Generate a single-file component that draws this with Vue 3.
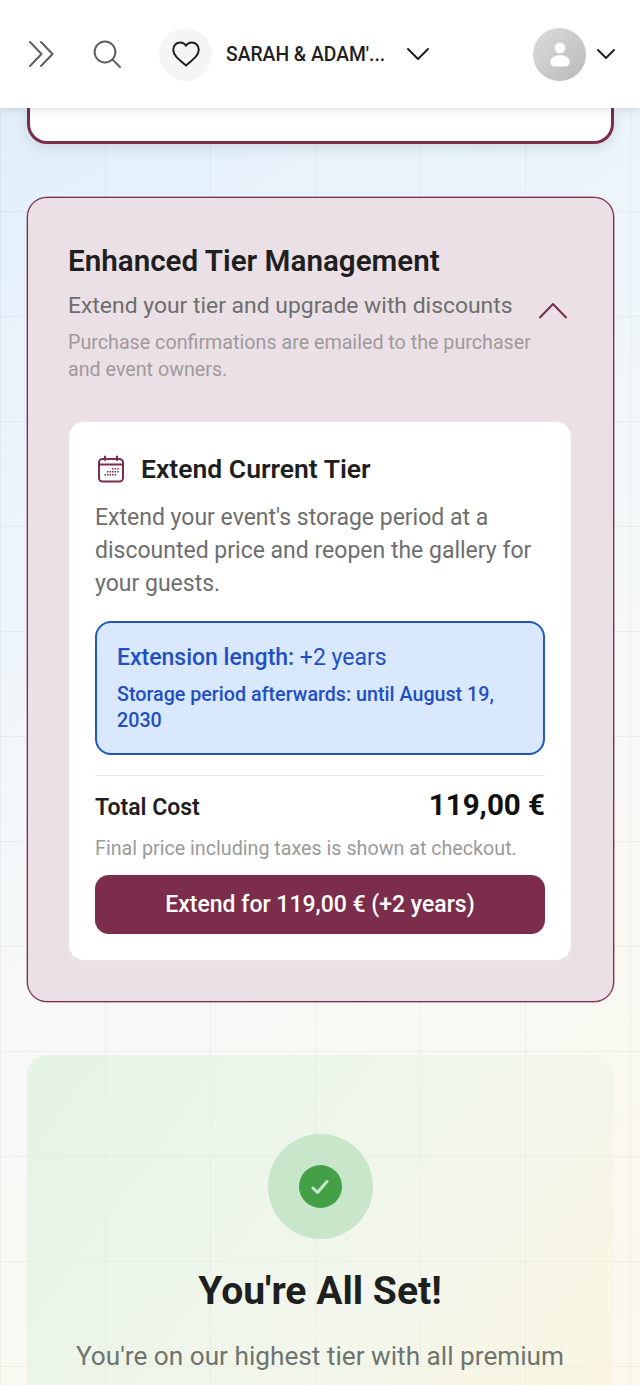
<script setup>
const brand = 'SARAH & ADAM\'...'
</script>

<template>
  <div class="page">
    <div class="grid"></div>
    <header class="topbar">
      <svg class="ico-double" width="28" height="28" viewBox="0 0 28 28" fill="none" stroke="#5f5f5f" stroke-width="2" stroke-linecap="round" stroke-linejoin="round">
        <path d="M2 2 L13.5 14 L2 26" />
        <path d="M13 2 L24.5 14 L13 26" />
      </svg>
      <svg class="ico-search" width="28" height="28" viewBox="0 0 28 28" fill="none" stroke="#5f5f5f" stroke-width="2" stroke-linecap="round">
        <circle cx="12" cy="12" r="10.4" />
        <path d="M19.6 19.6 L27 27" />
      </svg>
      <div class="heart-wrap">
        <svg width="28" height="26" viewBox="0 0 28 26" fill="none" stroke="#1f1f1f" stroke-width="2" stroke-linejoin="round">
          <path d="M14 24.4 C12.6 23.2 7.5 19.2 4.4 15.8 C2.3 13.5 1.2 11.3 1.2 8.8 C1.2 4.6 4.4 1.4 8.2 1.4 C10.6 1.4 12.8 2.6 14 4.8 C15.2 2.6 17.4 1.4 19.8 1.4 C23.6 1.4 26.8 4.6 26.8 8.8 C26.8 11.3 25.7 13.5 23.6 15.8 C20.5 19.2 15.4 23.2 14 24.4 Z" />
        </svg>
      </div>
      <span class="brand">{{ brand }}</span>
      <svg class="chev-main" width="24" height="14" viewBox="0 0 24 14" fill="none" stroke="#1f1f1f" stroke-width="2" stroke-linecap="round" stroke-linejoin="round">
        <path d="M2 2 L12 12 L22 2" />
      </svg>
      <div class="avatar">
        <svg width="20" height="25" viewBox="0 0 20 25" fill="#fff">
          <circle cx="10" cy="6" r="5.4" />
          <path d="M0.4 20 C0.4 15.4 4.8 13.2 10 13.2 C15.2 13.2 19.6 15.4 19.6 20 C19.6 23 17.5 24.4 15 24.4 L5 24.4 C2.5 24.4 0.4 23 0.4 20 Z" />
        </svg>
      </div>
      <svg class="chev-user" width="20" height="12" viewBox="0 0 20 12" fill="none" stroke="#1f1f1f" stroke-width="2" stroke-linecap="round" stroke-linejoin="round">
        <path d="M2 2 L10 10 L18 2" />
      </svg>
    </header>

    <main class="content">
      <div class="prev-card"></div>

      <section class="tier-card">
        <h2 class="tier-title">Enhanced Tier Management</h2>
        <div class="sub-row">
          <p class="tier-sub">Extend your tier and upgrade with discounts</p>
          <svg class="chev-up" width="30" height="17" viewBox="0 0 30 17" fill="none" stroke="#7b2d4b" stroke-width="2" stroke-linecap="round" stroke-linejoin="round">
            <path d="M2 15.5 L15 2 L28 15.5" />
          </svg>
        </div>
        <p class="tier-note">Purchase confirmations are emailed to the purchaser and event owners.</p>

        <div class="inner-card">
          <div class="inner-head">
            <svg class="cal" width="28" height="28" viewBox="0 0 28 28" fill="none" stroke="#7b2d4b" stroke-width="2" stroke-linecap="round">
              <rect x="2" y="4" width="24" height="22.5" rx="3.5" />
              <path d="M2 9.4 H26" />
              <path d="M8 1.5 V5 M20 1.5 V5" />
              <g fill="#7b2d4b" stroke="none">
                <rect x="15" y="13" width="1.5" height="1.5" /><rect x="17.6" y="13" width="1.5" height="1.5" /><rect x="20.2" y="13" width="1.5" height="1.5" />
                <rect x="10" y="16" width="1.5" height="1.5" /><rect x="12.5" y="16" width="1.5" height="1.5" /><rect x="15" y="16" width="1.5" height="1.5" /><rect x="17.6" y="16" width="1.5" height="1.5" /><rect x="20.2" y="16" width="1.5" height="1.5" />
                <rect x="7.5" y="19" width="1.5" height="1.5" /><rect x="10" y="19" width="1.5" height="1.5" /><rect x="12.5" y="19" width="1.5" height="1.5" /><rect x="15" y="19" width="1.5" height="1.5" /><rect x="17.6" y="19" width="1.5" height="1.5" />
              </g>
            </svg>
            <h3 class="inner-title">Extend Current Tier</h3>
          </div>
          <p class="inner-desc">Extend your event's storage period at a discounted price and reopen the gallery for your guests.</p>

          <div class="info-box">
            <p class="info-main"><strong>Extension length:</strong> +2 years</p>
            <p class="info-sub">Storage period afterwards: until August 19, 2030</p>
          </div>

          <div class="total-row">
            <span class="total-label">Total Cost</span>
            <span class="total-value">119,00 €</span>
          </div>
          <p class="tax-note">Final price including taxes is shown at checkout.</p>
          <button class="cta" type="button">Extend for 119,00 € (+2 years)</button>
        </div>
      </section>

      <section class="done-card">
        <div class="done-ring">
          <div class="done-dot">
            <svg width="18" height="16" viewBox="0 0 18 16" fill="none" stroke="#c8e6c9" stroke-width="3" stroke-linecap="round" stroke-linejoin="round">
              <path d="M2 9 L6.5 13.5 L16 2.5" />
            </svg>
          </div>
        </div>
        <h2 class="done-title">You're All Set!</h2>
        <p class="done-text">You're on our highest tier with all premium</p>
      </section>
    </main>
  </div>
</template>

<style scoped>
.page {
  position: relative;
  width: 640px;
  height: 1385px;
  overflow: hidden;
  font-family: Roboto, "Liberation Sans", sans-serif;
  background: linear-gradient(150deg, #dfeefb 0%, #ebf4fb 28%, #f7f9f8 58%, #fbf8ec 100%);
}
.grid {
  position: absolute;
  inset: 0;
  background-image:
    linear-gradient(to right, rgba(120, 120, 120, 0.08) 1px, transparent 1px),
    linear-gradient(to bottom, rgba(120, 120, 120, 0.08) 1px, transparent 1px);
  background-size: 105px 105px;
  background-position: 0 1px;
}
.topbar {
  position: relative;
  z-index: 2;
  height: 108px;
  background: #fff;
  box-shadow: 0 2px 8px rgba(0, 0, 0, 0.12);
  display: flex;
  align-items: center;
  padding: 0 24px 0 28px;
  box-sizing: border-box;
}
.ico-search { margin-left: 37px; }
.heart-wrap {
  width: 53px;
  height: 53px;
  border-radius: 50%;
  background: #f5f5f5;
  display: flex;
  align-items: center;
  justify-content: center;
  margin-left: 38px;
}
.brand {
  margin-left: 14px;
  font-size: 19.3px;
  font-weight: 500;
  color: #1f1f1f;
  white-space: nowrap;
}
.chev-main { margin-left: 21px; }
.avatar {
  width: 53px;
  height: 53px;
  border-radius: 50%;
  background: linear-gradient(135deg, #dcdcdc, #b9b9b9);
  display: flex;
  align-items: center;
  justify-content: center;
  margin-left: auto;
}
.chev-user { margin-left: 10px; }
.content {
  position: relative;
  z-index: 1;
  padding: 0 26.5px;
}
.prev-card {
  height: 36px;
  box-sizing: border-box;
  background: #fff;
  border: 3px solid #7b2d4b;
  border-top: 0;
  border-radius: 0 0 20px 20px;
  box-shadow: 0 4px 14px rgba(0, 0, 0, 0.1);
}
.tier-card {
  margin-top: 53px;
  height: 805px;
  box-sizing: border-box;
  background: #ebe0e5;
  border: 1px solid #7b2d4b;
  box-shadow: 0 0 0 0.5px rgba(123, 45, 75, 0.7);
  border-radius: 20px;
  padding: 44px 40.5px 0;
}
.tier-title {
  margin: 0;
  font-size: 29.6px;
  line-height: 38px;
  font-weight: 600;
  color: #1f1f1f;
}
.sub-row {
  display: flex;
  align-items: center;
  justify-content: space-between;
  margin-top: 8px;
}
.tier-sub {
  margin: 0;
  font-size: 22.9px;
  line-height: 36px;
  color: #6e6e6e;
}
.chev-up { margin: 8px 4px 0 0; }
.tier-note {
  margin: 6px 36px 0 0;
  font-size: 19.7px;
  line-height: 26.5px;
  color: #a09a9c;
}
.inner-card {
  margin-top: 38px;
  box-sizing: border-box;
  height: 540px;
  background: #fff;
  border: 1px solid #e6e6e6;
  border-radius: 16px;
  padding: 30px 26px 0;
}
.inner-head {
  display: flex;
  align-items: center;
  gap: 16px;
}
.cal { margin-left: 2px; }
.inner-title {
  margin: 0;
  font-size: 26.5px;
  line-height: 34px;
  font-weight: 600;
  color: #1f1f1f;
}
.inner-desc {
  margin: 15px 0 0;
  font-size: 23px;
  line-height: 33px;
  color: #6e6e6e;
}
.info-box {
  margin-top: 21px;
  box-sizing: border-box;
  height: 134px;
  background: #d9e8fd;
  border: 2px solid #2456c4;
  border-radius: 16px;
  padding: 18px 20px;
  color: #1f4fc4;
}
.info-main {
  margin: 0;
  font-size: 23px;
  line-height: 34px;
}
.info-main strong { font-weight: 500; }
.info-sub {
  margin: 7px 0 0;
  font-size: 19.7px;
  line-height: 26px;
  font-weight: 500;
}
.total-row {
  margin-top: 20px;
  padding-top: 11px;
  border-top: 1px solid #e9e9e9;
  display: flex;
  align-items: baseline;
  justify-content: space-between;
}
.total-label {
  font-size: 23px;
  font-weight: 600;
  color: #1f1f1f;
}
.total-value {
  font-size: 29.5px;
  line-height: 36px;
  font-weight: 700;
  color: #111;
}
.tax-note {
  margin: 12px 0 0;
  font-size: 19.7px;
  line-height: 27px;
  color: #9a9a9a;
}
.cta {
  display: block;
  width: 100%;
  height: 59px;
  margin-top: 13px;
  border: 0;
  border-radius: 14px;
  background: #7b2d4b;
  color: #fff;
  font-family: inherit;
  font-size: 23px;
  font-weight: 500;
}
.done-card {
  margin-top: 53px;
  height: 500px;
  background: linear-gradient(125deg, rgba(205, 238, 210, 0.45) 0%, rgba(225, 242, 225, 0.25) 55%, rgba(255, 240, 190, 0.3) 100%);
  border-radius: 20px;
  display: flex;
  flex-direction: column;
  align-items: center;
  padding-top: 79px;
  box-sizing: border-box;
}
.done-ring {
  width: 105px;
  height: 105px;
  border-radius: 50%;
  background: #c8e6c9;
  display: flex;
  align-items: center;
  justify-content: center;
}
.done-dot {
  width: 43px;
  height: 43px;
  border-radius: 50%;
  background: #43a047;
  display: flex;
  align-items: center;
  justify-content: center;
}
.done-title {
  margin: 26px 0 0;
  font-size: 39.1px;
  line-height: 52px;
  font-weight: 700;
  color: #1f1f1f;
}
.done-text {
  margin: 19px 0 0;
  font-size: 26.2px;
  line-height: 40px;
  color: #6f746f;
  white-space: nowrap;
}
</style>
